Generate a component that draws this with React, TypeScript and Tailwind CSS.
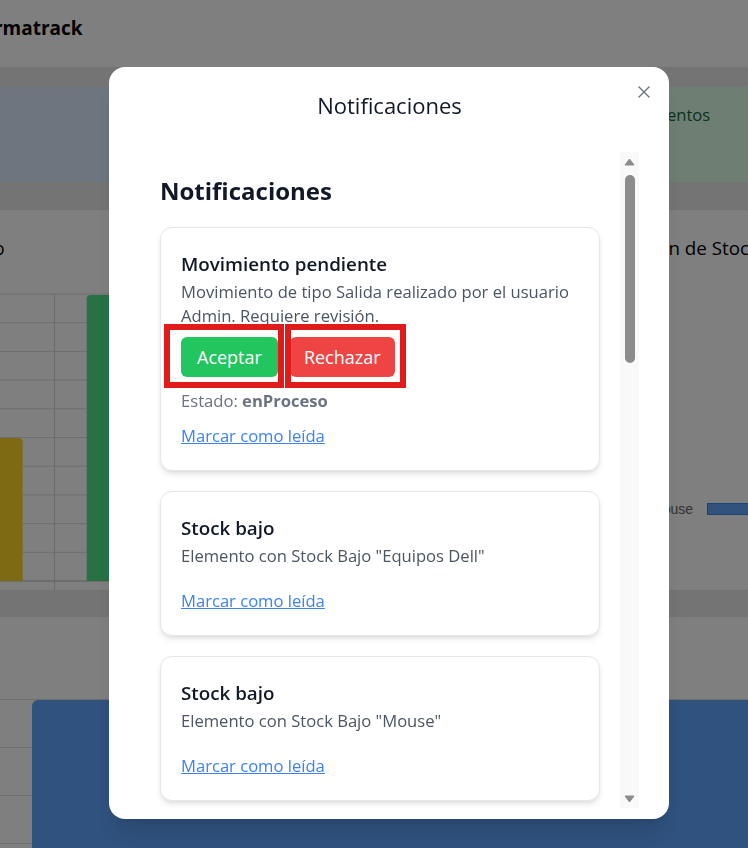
import React from 'react';

const stockItems = [
    'Equipos Dell',
    'Mouse',
    'Teclado',
    'Monitor',
    'Cable HDMI',
    'Impresora',
    'Tóner',
    'Router',
    'Disco Duro',
    'Memoria RAM',
    'Switch',
];

function Dashboard() {
    const gridLines = Array.from({ length: 11 }, (_, i) => 16 + i * 28.7);

    return (
        <div className="h-[848px] w-[748px] overflow-hidden bg-[#e8e8ea] font-['Open_Sans',sans-serif] text-gray-900">
            <header className="h-[67px] overflow-hidden bg-white pt-3.5">
                <span className="-ml-[44px] text-[19px] font-bold leading-7 text-black">Informatrack</span>
            </header>

            {/* summary cards */}
            <div className="-ml-10 mt-5 grid h-[95px] w-[860px] grid-cols-[610px_1fr] gap-6">
                <div className="rounded-md bg-[#dbeafe] p-4 text-center text-[#1e40af]">Equipos registrados</div>
                <div className="rounded-md bg-[#dcfce7] p-4 text-[16.6px] text-[#166534]">Movimientos</div>
            </div>

            {/* charts */}
            <div className="-ml-[160px] mt-7 grid h-[378px] w-[1000px] grid-cols-[690px_1fr] gap-5">
                <div className="bg-white p-6 pb-0">
                    <h3 className="text-lg leading-7 text-black">Stock por Estado</h3>
                    <svg width="556" height="312" className="ml-[120px] mt-4 overflow-visible">
                        {gridLines.map((y) => (
                            <line key={y} x1="0" x2="556" y1={y} y2={y} stroke="#dcdcdc" strokeWidth="1" />
                        ))}
                        <line x1="0" x2="556" y1="303" y2="303" stroke="#c8c8c8" strokeWidth="1" />
                        <line x1="70.5" x2="70.5" y1="16" y2="312" stroke="#d4d4d4" strokeWidth="1" />
                        <path d="M0 160 H34.7 a4 4 0 0 1 4 4 V303 H0 Z" fill="#fcd424" />
                        <path d="M102.7 21 a4 4 0 0 1 4 -4 H162 a4 4 0 0 1 4 4 V303 H102.7 Z" fill="#4ce488" />
                    </svg>
                </div>
                <div className="bg-white p-6">
                    <h3 className="text-[18.8px] leading-7 text-black">Distribución de Stock</h3>
                    <div className="mt-[237px] flex items-center">
                        <span className="w-[119px] text-right font-['Liberation_Sans',sans-serif] text-sm text-[#666]">Mouse</span>
                        <div className="ml-[14px] h-3 w-[200px] border border-[#3b82f6] bg-[#60a5fa]" />
                    </div>
                </div>
            </div>

            {/* bottom chart */}
            <div className="-ml-10 mt-[29px] h-[240px] w-[860px] bg-white">
                <svg width="860" height="240">
                    {[82, 130, 178, 226].map((y) => (
                        <line key={y} x1="0" x2="860" y1={y + 0.5} y2={y + 0.5} stroke="#dcdcdc" strokeWidth="1" />
                    ))}
                    <path d="M72 89 a6 6 0 0 1 6 -6 H860 V240 H72 Z" fill="#5fa4fc" />
                </svg>
            </div>
        </div>
    );
}

function NotificationCard({ title, text, pending }: { title: string; text: string; pending?: boolean }) {
    return (
        <div className="rounded-xl border border-[#e5e7eb] bg-white px-5 pb-[22px] pt-[22px] shadow-md">
            <h3 className="text-[18.8px] font-semibold leading-7 text-[#111827]">{title}</h3>
            <p className="mt-0.5 text-[16.6px] leading-6 text-[#4b5563]">{text}</p>
            {pending && (
                <>
                    <div className="relative mt-[9px] flex gap-3">
                        <button className="h-10 rounded-md bg-[#22c55e] px-4 text-lg text-white">Aceptar</button>
                        <button className="h-10 rounded-md bg-[#ef4444] px-[14px] text-lg text-white">Rechazar</button>
                        {/* highlight boxes */}
                        <span className="absolute -left-[17px] -top-[13px] h-[64px] w-[120px] border-[6px] border-[#e11a1a]" />
                        <span className="absolute left-[104px] -top-[13px] h-[64px] w-[121px] border-[6px] border-[#e11a1a]" />
                    </div>
                    <p className="mt-3 text-[16.6px] leading-6 text-[#6b7280]">
                        Estado: <span className="font-bold">enProceso</span>
                    </p>
                </>
            )}
            <a
                href="#"
                className={`${pending ? 'mt-[11px]' : 'mt-[21px]'} block w-fit text-[16.6px] leading-6 text-[#3b82f6] underline`}
            >
                Marcar como leída
            </a>
        </div>
    );
}

function ScrollTrack() {
    return (
        <div className="flex w-[19px] flex-col items-center bg-[#f9f9f9]">
            <svg width="11" height="8" viewBox="0 0 11 8" className="mt-[6px]">
                <path d="M5.5 1 L10 7 H1 Z" fill="#8c8c8c" stroke="#8c8c8c" strokeLinejoin="round" />
            </svg>
            <div className="mt-[9px] h-[188px] w-[10px] rounded-full bg-[#8c8c8c]" />
            <div className="flex-1" />
            <svg width="11" height="8" viewBox="0 0 11 8" className="mb-[5px]">
                <path d="M1 1 H10 L5.5 7 Z" fill="#8c8c8c" stroke="#8c8c8c" strokeLinejoin="round" />
            </svg>
        </div>
    );
}

export default function App() {
    return (
        <div className="relative h-[848px] w-[748px] overflow-hidden">
            <Dashboard />

            <div className="fixed inset-0 bg-black/50 pl-[109px] pt-[67px] font-['Open_Sans',sans-serif]">
                <div className="relative flex h-[752px] w-[560px] flex-col rounded-2xl bg-white pb-[11px] pl-[31px] pr-[30px] shadow-xl">
                    <div className="h-[85px] pt-6 text-center">
                        <h2 className="text-[22px] leading-7 text-[#111827]">Notificaciones</h2>
                    </div>
                    <button className="absolute right-[19px] top-[19px] text-[#6b7280]" aria-label="Cerrar">
                        <svg width="12" height="12" viewBox="0 0 12 12" fill="none" stroke="currentColor" strokeWidth="1.4">
                            <path d="M0.5 0.5 11.5 11.5 M11.5 0.5 0.5 11.5" />
                        </svg>
                    </button>

                    <div className="flex min-h-0 flex-1">
                        <div className="flex-1 overflow-hidden px-5 pt-[23px]">
                            <h2 className="mb-5 text-2xl font-bold leading-8 text-[#111827]">Notificaciones</h2>
                            <div className="space-y-5">
                                <NotificationCard
                                    title="Movimiento pendiente"
                                    text="Movimiento de tipo Salida realizado por el usuario Admin. Requiere revisión."
                                    pending
                                />
                                {stockItems.map((item) => (
                                    <NotificationCard key={item} title="Stock bajo" text={`Elemento con Stock Bajo "${item}"`} />
                                ))}
                            </div>
                        </div>
                        <ScrollTrack />
                    </div>
                </div>
            </div>
        </div>
    );
}
